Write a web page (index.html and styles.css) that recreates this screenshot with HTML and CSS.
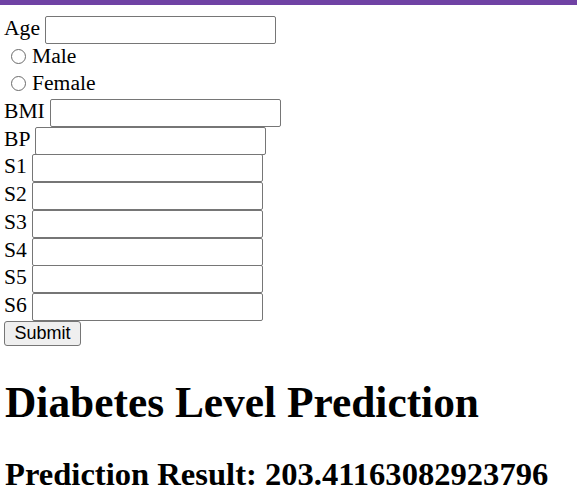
FILE: index.html
```html
<!DOCTYPE html>
<html>
<head>
<meta charset="utf-8">
<link rel="stylesheet" href="styles.css">
</head>
<body>
<div class="topbar"></div>
<main class="page">
  <form class="form">
    <div class="row">Age <input class="field" type="text"></div>
    <div class="row"><input class="radio" type="radio" name="sex"><span>Male</span></div>
    <div class="row"><input class="radio" type="radio" name="sex"><span>Female</span></div>
    <div class="row">BMI <input class="field" type="text"></div>
    <div class="row">BP <input class="field" type="text"></div>
    <div class="row">S1 <input class="field" type="text"></div>
    <div class="row">S2 <input class="field" type="text"></div>
    <div class="row">S3 <input class="field" type="text"></div>
    <div class="row">S4 <input class="field" type="text"></div>
    <div class="row">S5 <input class="field" type="text"></div>
    <div class="row">S6 <input class="field" type="text"></div>
    <div class="row"><button class="submit" type="button">Submit</button></div>
  </form>
  <h1 class="title">Diabetes Level Prediction</h1>
  <h2 class="result">Prediction Result: 203.41163082923796</h2>
</main>
</body>
</html>
```

FILE: styles.css
```css
html, body {
  margin: 0;
  padding: 0;
  background: #ffffff;
}
body {
  font-family: "Liberation Serif", "Times New Roman", serif;
  font-size: 21.6px;
  color: #000;
}
.topbar {
  height: 4.5px;
  background: #7042a4;
}
.page {
  padding: 10.5px 4px 0 4px;
}
.form {
  margin: 0;
}
.row {
  height: 27.7px;
  line-height: 27.7px;
  white-space: nowrap;
}
.field {
  box-sizing: border-box;
  width: 231px;
  height: 28px;
  margin: 0;
  padding: 1px 3px;
  border: 1.4px solid #767676;
  border-radius: 2px;
  background: #fff;
  vertical-align: middle;
  font-family: "Liberation Sans", Arial, sans-serif;
  font-size: 18px;
}
.radio {
  appearance: none;
  -webkit-appearance: none;
  box-sizing: border-box;
  width: 15px;
  height: 15px;
  margin: 0 6px 0 7px;
  border: 1.3px solid #6b6b6b;
  border-radius: 50%;
  background: #fff;
  vertical-align: -1px;
}
.submit {
  box-sizing: border-box;
  height: 25px;
  padding: 0 8px;
  margin: 1px 0 0 0;
  width: 77px;
  border: 1.3px solid #767676;
  border-radius: 3px;
  background: #efefef;
  font-family: "Liberation Sans", Arial, sans-serif;
  font-size: 18px;
  color: #000;
  vertical-align: top;
  line-height: 22px;
}
.title {
  font-size: 43.4px;
  margin: 30px 0 29px 1px;
  font-weight: bold;
}
.result {
  font-size: 32.6px;
  margin: 0 0 0 1px;
  font-weight: bold;
}
```
